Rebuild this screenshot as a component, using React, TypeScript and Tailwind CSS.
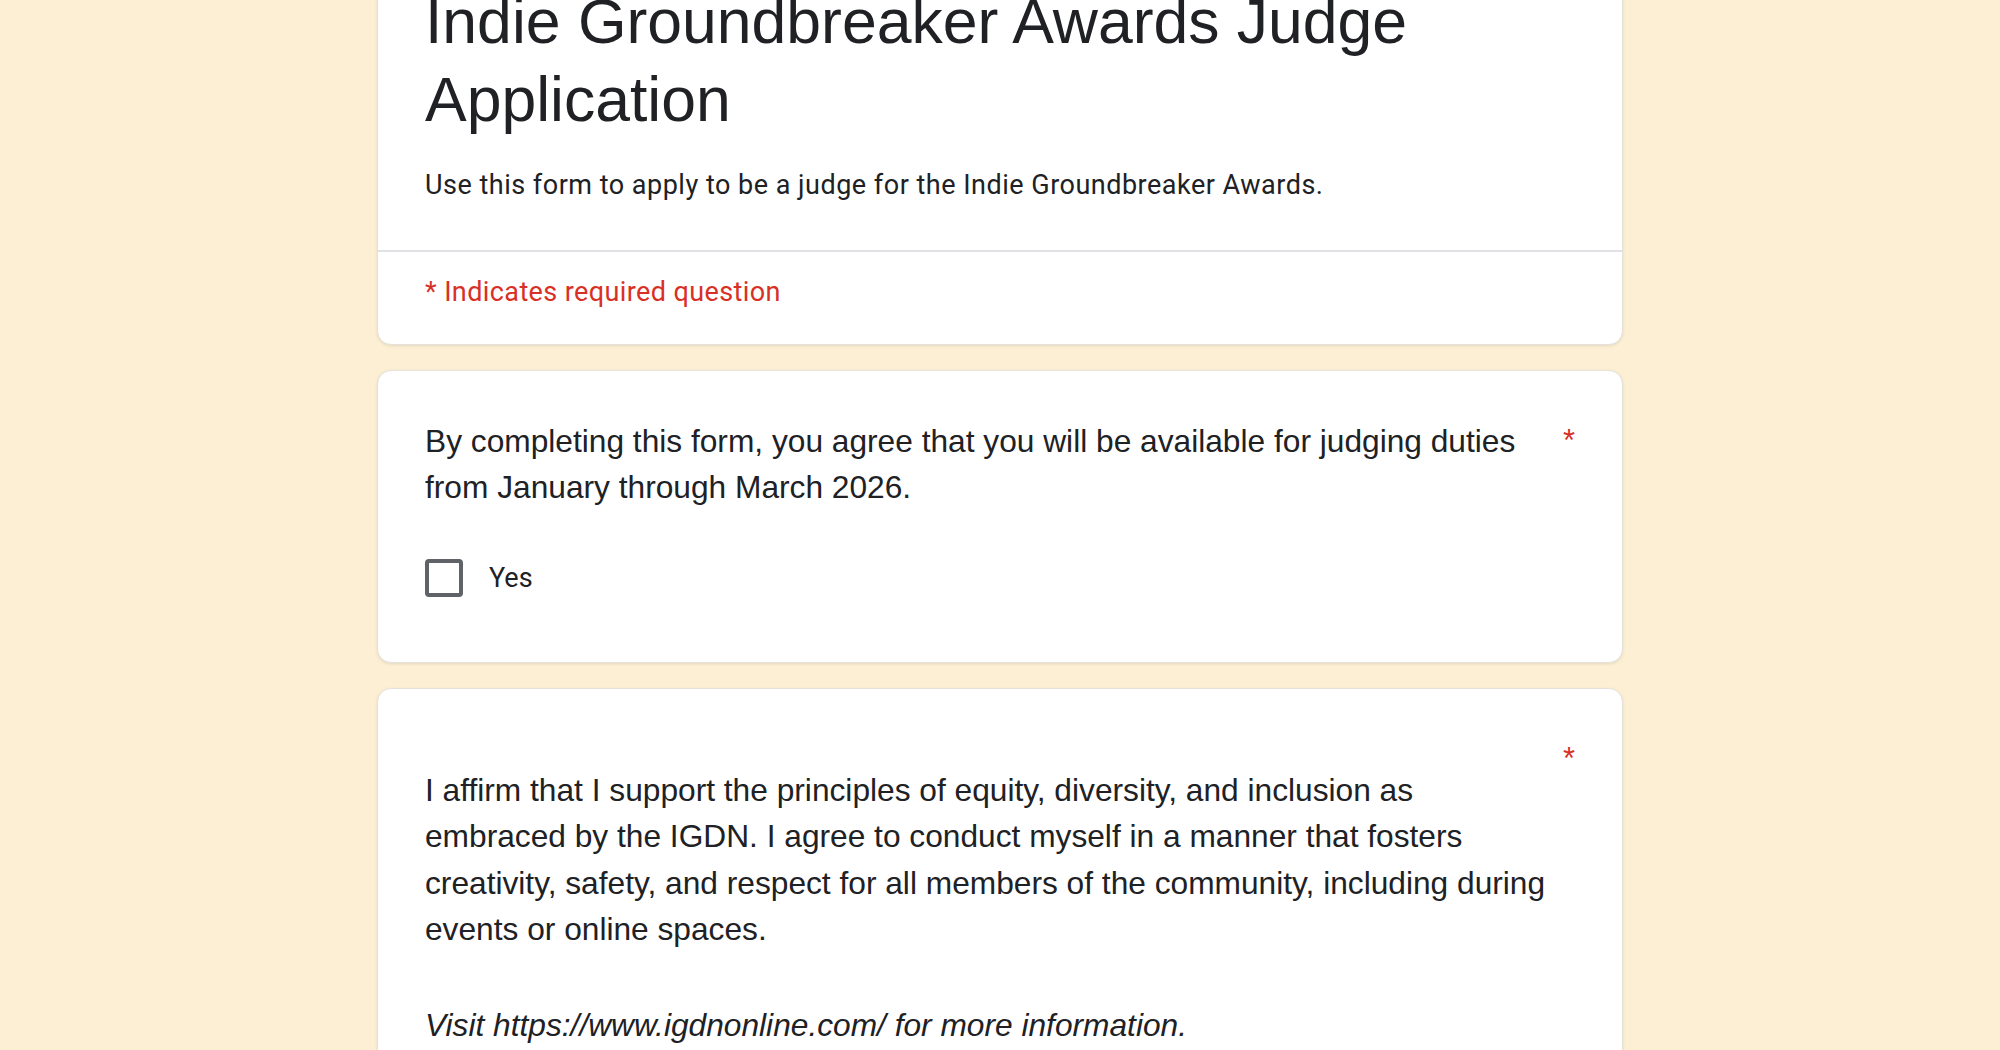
import React from "react";

const questionFont = "font-['Liberation_Sans',Arial,sans-serif]";
const uiFont = "font-['Roboto','Noto_Sans',sans-serif]";

const Asterisk = () => (
    <span
        className={`w-[26px] flex-none text-right text-[31px] leading-[46.5px] text-[#d93025] ${questionFont}`}
        aria-label="Required question"
    >
        *
    </span>
);

const Checkbox = ({ label }: { label: string }) => (
    <label className="flex items-center gap-[26px]">
        <span className="h-[38px] w-[38px] flex-none rounded-[4px] border-[4px] border-[#5f6368] bg-white" />
        <span className={`text-[27px] leading-[38px] text-[#202124] ${uiFont}`}>
            {label}
        </span>
    </label>
);

export default function App() {
    return (
        <div className="min-h-screen overflow-hidden bg-[#fcefd4]">
            <div className="mx-auto -mt-[67px] flex w-[1246px] flex-col gap-[25px] pb-16">
                {/* header card */}
                <div className="rounded-[14px] border border-[#e6e2da] bg-white shadow-[0_1px_3px_rgba(60,64,67,0.12)]">
                    <div className="px-[47px] pt-[48px] pb-[45px]">
                        <h1
                            className={`text-[62.5px] leading-[78px] text-[#202124] ${questionFont}`}
                        >
                            Indie Groundbreaker Awards Judge Application
                        </h1>
                        <p
                            className={`mt-[28px] text-[27px] leading-[39px] tracking-[0.5px] text-[#202124] ${uiFont}`}
                        >
                            Use this form to apply to be a judge for the Indie
                            Groundbreaker Awards.
                        </p>
                    </div>
                    <div
                        className={`border-t-2 border-[#e0e1e4] px-[47px] pt-[21px] pb-[32px] text-[27px] leading-[39px] tracking-[0.4px] text-[#d93025] ${uiFont}`}
                    >
                        * Indicates required question
                    </div>
                </div>

                {/* availability */}
                <div className="rounded-[14px] border border-[#e6e2da] bg-white px-[47px] pt-[47px] pb-[65px] shadow-[0_1px_3px_rgba(60,64,67,0.12)]">
                    <div className="flex items-start">
                        <p
                            className={`flex-1 text-[31.7px] leading-[46px] text-[#202124] ${questionFont}`}
                        >
                            By completing this form, you agree that you will be
                            available for judging duties from January through
                            March 2026.
                        </p>
                        <Asterisk />
                    </div>
                    <div className="mt-[49px]">
                        <Checkbox label="Yes" />
                    </div>
                </div>

                {/* code of conduct */}
                <div className="rounded-[14px] border border-[#e6e2da] bg-white px-[47px] pt-[47px] pb-[65px] shadow-[0_1px_3px_rgba(60,64,67,0.12)]">
                    <div className="flex items-start">
                        <div
                            className={`flex-1 pt-[31px] text-[31.7px] leading-[46.3px] text-[#202124] ${questionFont}`}
                        >
                            <p>
                                I affirm that I support the principles of equity,
                                diversity, and inclusion as embraced by the IGDN. I
                                agree to conduct myself in a manner that fosters
                                creativity, safety, and respect for all members of
                                the community, including during events or online
                                spaces.
                            </p>
                            <p className="h-[50px]" />
                            <p className="italic">
                                Visit https://www.igdnonline.com/ for more
                                information.
                            </p>
                        </div>
                        <Asterisk />
                    </div>
                    <div className="mt-[49px]">
                        <Checkbox label="Yes" />
                    </div>
                </div>
            </div>
        </div>
    );
}
